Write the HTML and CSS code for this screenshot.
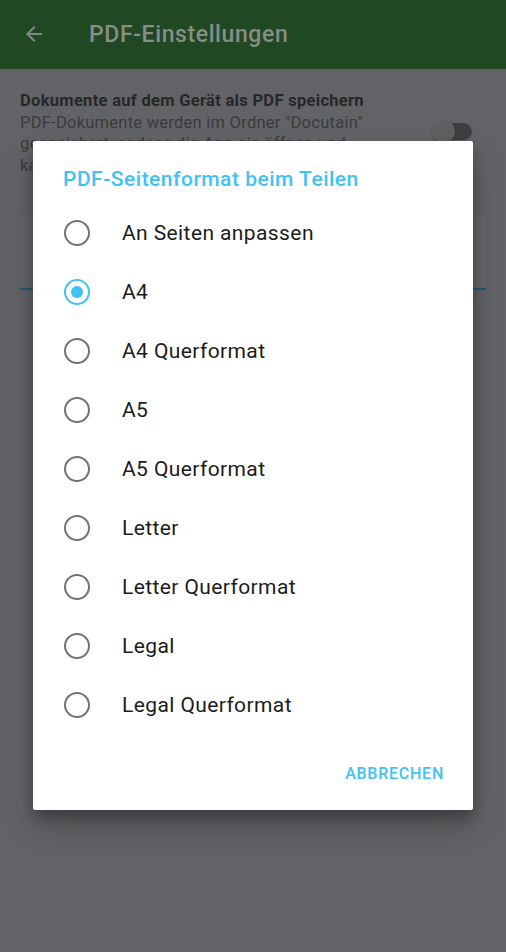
FILE: index.html
```html
<!DOCTYPE html>
<html lang="de">
<head>
<meta charset="utf-8">
<title>PDF-Einstellungen</title>
<link rel="stylesheet" href="styles.css">
</head>
<body>
<div class="screen">
  <header class="toolbar">
    <svg class="back" width="24" height="24" viewBox="0 0 24 24"><path d="M20 11H7.83l5.59-5.59L12 4l-8 8 8 8 1.41-1.41L7.83 13H20v-2z" fill="currentColor"/></svg>
    <h1 class="toolbar-title">PDF-Einstellungen</h1>
  </header>
  <main class="settings">
    <div class="pref">
      <div class="pref-text">
        <div class="pref-title">Dokumente auf dem Gerät als PDF speichern</div>
        <div class="pref-summary">PDF-Dokumente werden im Ordner "Docutain"<br>gespeichert, sodass die App sie öffnen und<br>kann.</div>
      </div>
      <div class="switch"><span class="thumb"></span></div>
    </div>
    <div class="field"></div>
  </main>

  <div class="dialog">
    <h2 class="dialog-title">PDF-Seitenformat beim Teilen</h2>
    <ul class="options">
      <li class="option"><span class="radio"></span><span class="label">An Seiten anpassen</span></li>
      <li class="option"><span class="radio checked"></span><span class="label">A4</span></li>
      <li class="option"><span class="radio"></span><span class="label">A4 Querformat</span></li>
      <li class="option"><span class="radio"></span><span class="label">A5</span></li>
      <li class="option"><span class="radio"></span><span class="label">A5 Querformat</span></li>
      <li class="option"><span class="radio"></span><span class="label">Letter</span></li>
      <li class="option"><span class="radio"></span><span class="label">Letter Querformat</span></li>
      <li class="option"><span class="radio"></span><span class="label">Legal</span></li>
      <li class="option"><span class="radio"></span><span class="label">Legal Querformat</span></li>
    </ul>
    <div class="actions"><button class="btn">ABBRECHEN</button></div>
  </div>
</div>
</body>
</html>
```

FILE: styles.css
```css
* { box-sizing: border-box; }
html, body { margin: 0; padding: 0; }
body {
  width: 506px;
  height: 952px;
  overflow: hidden;
  font-family: Roboto, "Noto Sans", "Liberation Sans", sans-serif;
  background: #626366;
}
.screen {
  position: relative;
  width: 506px;
  height: 952px;
  background: #626366;
}
.toolbar {
  height: 69px;
  background: #1f4823;
  display: flex;
  align-items: center;
  padding-left: 22px;
  color: #7f8a80;
}
.back { width: 24px; height: 24px; flex: none; margin-top: -1px; }
.toolbar-title {
  margin: 0 0 0 43px;
  font-size: 23px;
  font-weight: 500;
  color: #868e87;
  letter-spacing: 0.6px;
}
.settings { padding: 21px 20px 0 20px; }
.pref {
  display: flex;
  align-items: flex-start;
}
.pref-text { width: 412px; }
.pref-title {
  font-size: 16.5px;
  font-weight: 700;
  color: #262728;
  line-height: 21.5px;
  letter-spacing: 0.3px;
}
.pref-summary {
  font-size: 16.5px;
  color: #3a3b3d;
  line-height: 21.5px;
  letter-spacing: 0.25px;
}
.switch {
  position: relative;
  width: 38px;
  height: 17px;
  border-radius: 9px;
  background: #3e3f41;
  margin-top: 33px;
  margin-left: 2px;
}
.thumb {
  position: absolute;
  left: -2px;
  top: -3px;
  width: 23px;
  height: 23px;
  border-radius: 50%;
  background: #5f6062;
  box-shadow: 0 1px 2px rgba(0,0,0,0.3);
}
.field {
  margin-top: 39px;
  height: 75px;
  background: #656669;
  border-bottom: 2px solid #1d5a78;
}
.dialog {
  position: absolute;
  left: 33px;
  top: 141px;
  width: 440px;
  height: 669px;
  background: #fff;
  border-radius: 2px;
  box-shadow: 0 16px 30px rgba(0,0,0,0.24), 0 8px 12px rgba(0,0,0,0.2);
  padding-top: 24px;
  display: flex;
  flex-direction: column;
}
.dialog-title {
  margin: 0;
  padding-left: 30px;
  font-size: 21px;
  font-weight: 500;
  line-height: 28px;
  color: #42c1f5;
  letter-spacing: 0.5px;
}
.options {
  list-style: none;
  margin: 10px 0 0 0;
  padding: 0;
}
.option {
  height: 59px;
  display: flex;
  align-items: center;
  padding-left: 31px;
}
.radio {
  width: 26px;
  height: 26px;
  border-radius: 50%;
  border: 2.5px solid #737373;
  flex: none;
  display: flex;
  align-items: center;
  justify-content: center;
}
.radio.checked { border-color: #42c1f5; }
.radio.checked::after {
  content: "";
  width: 12px;
  height: 12px;
  border-radius: 50%;
  background: #42c1f5;
}
.label {
  margin-left: 32px;
  font-size: 21px;
  color: #1c1c1c;
  letter-spacing: 0.4px;
}
.actions {
  margin-top: auto;
  display: flex;
  justify-content: flex-end;
  padding: 0 21px 19px 0;
}
.btn {
  height: 36px;
  border: none;
  background: transparent;
  padding: 0 8px;
  font-family: inherit;
  font-size: 16px;
  font-weight: 500;
  color: #42c1f5;
  letter-spacing: 0.75px;
}
```
